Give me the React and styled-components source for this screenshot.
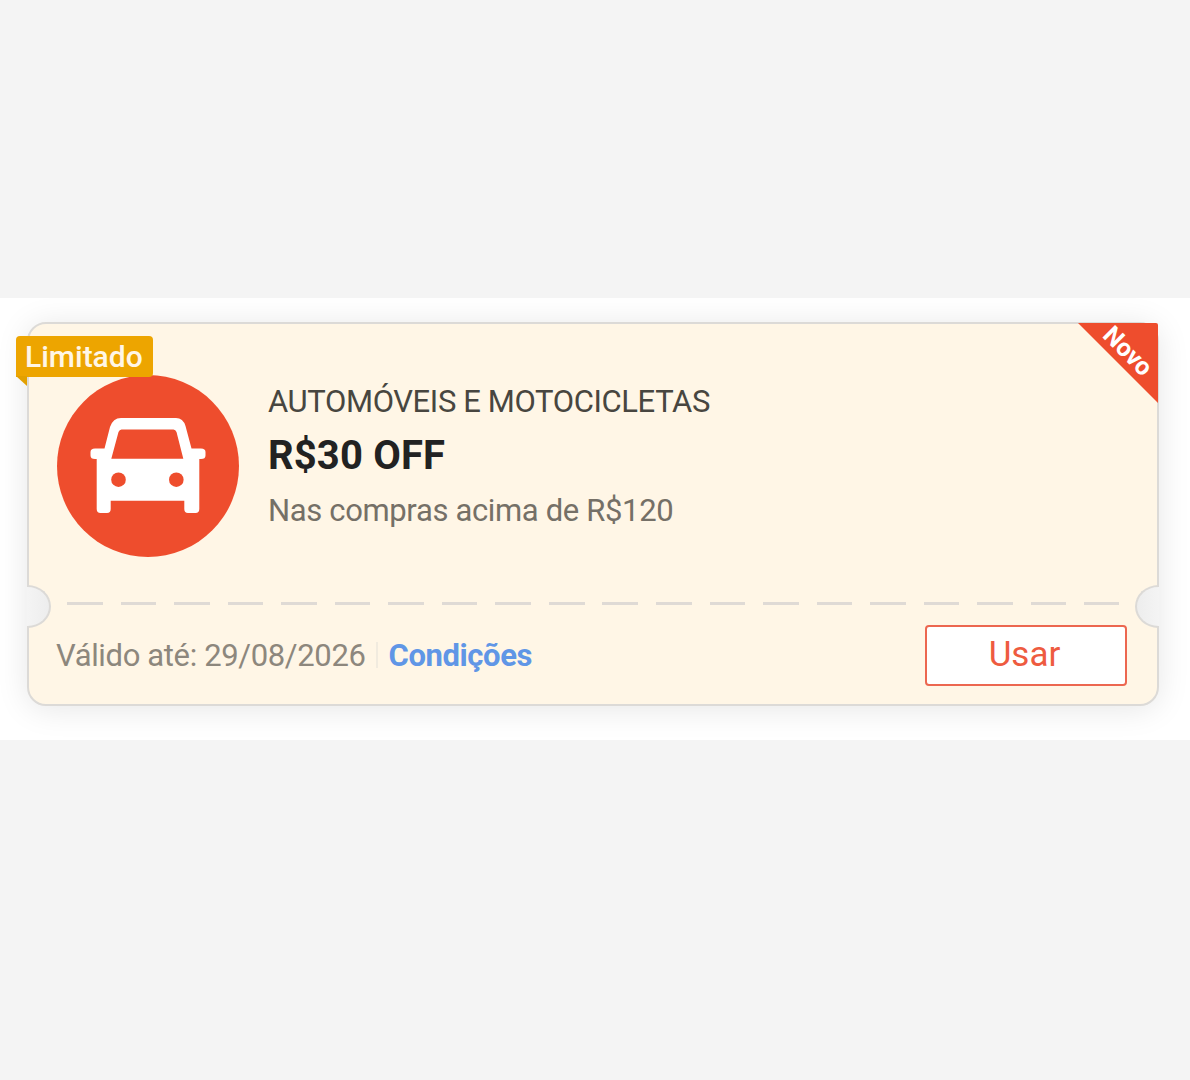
import React from "react";
import styled, { createGlobalStyle } from "styled-components";

const voucher = {
  category: "AUTOMÓVEIS E MOTOCICLETAS",
  discount: "R$30 OFF",
  minimum: "Nas compras acima de R$120",
  validity: "Válido até: 29/08/2026",
};

const CarIcon = () => (
  <svg width="182" height="182" viewBox="0 0 182 182">
    <path
      fill="#fff"
      fillRule="evenodd"
      d="M64 43H119Q126 43 128.500 51L134.500 73.500H144Q148.500 73.500 148.500 77V80.500Q148.500 84 144 84H142.300V134Q142.300 138 138.500 138H131Q127.300 138 127.300 134V125.700H53.700V134Q53.700 138 50 138H43.500Q39.700 138 39.700 134V84H38Q33.500 84 33.500 80.500V77Q33.500 73.500 38 73.500H47.500L53 52Q56 43 64 43ZM64.500 54.500Q62.500 54.500 61.500 57L54.300 83.700H126.300L119.500 57Q118.500 54.500 116.500 54.500Z"
    />
    <circle cx="61.500" cy="104.700" r="7.300" fill="#ee4d2d" />
    <circle cx="119.300" cy="104.700" r="7.300" fill="#ee4d2d" />
  </svg>
);

const App = () => {
  return (
    <Page>
      <GlobalStyle />
      <Strip>
        <Card>
          <Tag>Limitado</Tag>
          <Corner>
            <CornerText>Novo</CornerText>
          </Corner>
          <Body>
            <Circle>
              <CarIcon />
            </Circle>
            <Info>
              <Category>{voucher.category}</Category>
              <Discount>{voucher.discount}</Discount>
              <Minimum>{voucher.minimum}</Minimum>
            </Info>
          </Body>
          <Dashes />
          <Footer>
            <Validity>{voucher.validity}</Validity>
            <Divider />
            <Conditions href="#">Condições</Conditions>
            <UseButton>Usar</UseButton>
          </Footer>
          <Notch $side="left" />
          <Notch $side="right" />
        </Card>
      </Strip>
    </Page>
  );
};

const GlobalStyle = createGlobalStyle`
  * {
    box-sizing: border-box;
  }

  body {
    margin: 0;
    background: #f4f4f4;
    font-family: Roboto, "Liberation Sans", sans-serif;
  }
`;

const Page = styled.div`
  min-height: 100vh;
  padding-top: 298px;
  background: #f4f4f4;
`;

const Strip = styled.div`
  height: 442px;
  padding: 24px 31px 34px 27px;
  background: #fff;
  overflow: hidden;
`;

const Card = styled.div`
  position: relative;
  display: flex;
  flex-direction: column;
  height: 384px;
  border: 2px solid #dcdad7;
  border-radius: 19px;
  background: #fff6e6;
  box-shadow: 0 3px 32px rgba(0, 0, 0, 0.1);
`;

const Tag = styled.div`
  position: absolute;
  z-index: 1;
  top: 12px;
  left: -13px;
  width: 137px;
  height: 41px;
  padding-left: 9px;
  border-radius: 4px 4px 4px 0;
  background: #eda500;
  color: #fff6e6;
  font-size: 30px;
  font-weight: 500;
  line-height: 41px;
  white-space: nowrap;

  /* folded end of the tag */
  &::after {
    content: "";
    position: absolute;
    top: 40px;
    left: 0;
    width: 11px;
    height: 10px;
    background: #e2a000;
    clip-path: polygon(0 0, 100% 0, 100% 100%);
  }
`;

const Corner = styled.div`
  position: absolute;
  top: -1px;
  right: -1px;
  width: 80px;
  height: 80px;
  background: #ee4d2d;
  border-top-right-radius: 2px;
  clip-path: polygon(0 0, 100% 0, 100% 100%);
`;

const CornerText = styled.span`
  position: absolute;
  top: 28px;
  left: 50px;
  color: #fff;
  font-size: 25px;
  font-weight: 700;
  line-height: 1;
  transform: translate(-50%, -50%) rotate(45deg);
`;

const Body = styled.div`
  display: flex;
  height: 278px;
  padding: 51px 28px 0;
`;

const Circle = styled.div`
  flex: none;
  width: 182px;
  height: 182px;
  margin-right: 29px;
  border-radius: 50%;
  background: #ee4d2d;
`;

const Info = styled.div`
  padding-top: 7px;
  white-space: nowrap;
`;

const Category = styled.div`
  color: #484640;
  font-size: 31px;
  letter-spacing: -0.38px;
  line-height: 40px;
`;

const Discount = styled.div`
  margin-top: 6px;
  color: #222;
  font-size: 40px;
  font-weight: 700;
  letter-spacing: 0.15px;
  line-height: 56px;
`;

const Minimum = styled.div`
  margin-top: 7px;
  color: #757067;
  font-size: 31px;
  letter-spacing: -0.35px;
  line-height: 40px;
`;

const Dashes = styled.div`
  height: 3px;
  margin: 0 38px;
  background: repeating-linear-gradient(
    to right,
    #dfdad5 0 35.600px,
    transparent 35.600px 53.550px
  );
`;

const Footer = styled.div`
  display: flex;
  align-items: center;
  height: 98px;
  padding: 2px 30px 0 27px;
  font-size: 31px;
  letter-spacing: -0.36px;
  white-space: nowrap;
`;

const Validity = styled.span`
  color: #8d877d;
`;

const Divider = styled.span`
  width: 2px;
  height: 26px;
  margin: 0 11px 0 10px;
  background: #f1ebdf;
`;

const Conditions = styled.a`
  color: #6096e6;
  font-weight: 700;
  letter-spacing: -0.4px;
  text-decoration: none;
`;

const UseButton = styled.button`
  width: 202px;
  height: 61px;
  margin-left: auto;
  padding: 0 3px 1px 0;
  border: 2px solid #ec6750;
  border-radius: 4px;
  background: #fff;
  color: #ee5b40;
  font-family: inherit;
  font-size: 35px;
`;

/* half-round cutout on the card edge */
const Notch = styled.div`
  position: absolute;
  top: 261px;
  ${({ $side }) => $side}: -2px;
  width: 24px;
  height: 43px;
  border: 2px solid #dcdad7;
  border-${({ $side }) => $side}: none;
  border-radius: ${({ $side }) =>
    $side === "left" ? "0 24px 24px 0 / 0 22px 22px 0" : "24px 0 0 24px / 22px 0 0 22px"};
  background: linear-gradient(
    to ${({ $side }) => ($side === "left" ? "right" : "left")},
    #f4f4f4,
    #ededed
  );
`;

export default App;
